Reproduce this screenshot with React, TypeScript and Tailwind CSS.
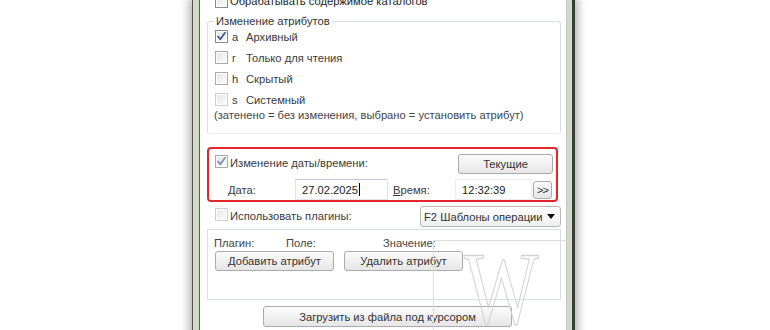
import React from 'react';

type BoxTone = 'normal' | 'light' | 'faint';

const CheckBox: React.FC<{ checked?: boolean; tone?: BoxTone; className?: string }> = ({
  checked,
  tone = 'normal',
  className = ''
}) => {
  const border =
    tone === 'normal' ? 'border-[#8a8a8a]' : tone === 'light' ? 'border-[#a9a9a9]' : 'border-[#cfcfcf]';
  return (
    <span
      className={`relative inline-flex w-[13px] h-[13px] shrink-0 border ${border} bg-gradient-to-br from-[#e4e4e4] to-[#fdfdfd] shadow-[inset_0_0_0_1px_#fff] ${className}`}
    >
      {checked && (
        <svg viewBox="0 0 13 13" className="absolute -left-px -top-px w-[13px] h-[13px]">
          <path
            d="M3 6.5 L5.3 9.3 L10 2.8"
            fill="none"
            stroke={tone === 'normal' ? '#3c5a9a' : '#7d8fb5'}
            strokeWidth="1.8"
            strokeLinecap="round"
            strokeLinejoin="round"
          />
        </svg>
      )}
    </span>
  );
};

const Button: React.FC<{ children: React.ReactNode; className?: string }> = ({ children, className = '' }) => (
  <div
    className={`flex items-center justify-center whitespace-nowrap border border-[#ababab] rounded-[3px] bg-gradient-to-b from-[#fbfbfb] to-[#e6e6e6] text-[#333] ${className}`}
  >
    {children}
  </div>
);

const AttrRow: React.FC<{ letter: string; label: string; checked?: boolean; tone?: BoxTone }> = ({
  letter,
  label,
  checked,
  tone
}) => (
  <div className="h-[21px] flex items-center">
    <CheckBox checked={checked} tone={tone} />
    <span className="ml-[4px] w-[14px]">{letter}</span>
    <span>{label}</span>
  </div>
);

export default function App() {
  return (
    <div className="relative w-[770px] h-[330px] overflow-hidden bg-white font-['Liberation_Sans',Arial,sans-serif] text-[11.2px] leading-[14px] text-[#3a3a3a] whitespace-nowrap">
      {/* window frame */}
      <div className="ml-[192px] w-[383px] h-[340px] flex bg-[#cfdbc2] border-l border-l-[#505050] border-r-[3px] border-r-[#3a3a3a] pl-[6px] pr-[5px] shadow-[0_0_9px_3px_rgba(0,0,0,0.3)]">
        <div className="flex-1 bg-white border-l border-l-[#5c5c5c] border-r border-r-[#c4c4c4] pl-[7px] pr-[5px] flex flex-col">
          {/* cut-off top row */}
          <div className="-mt-[7px] h-[16px] flex items-center pl-[8px] text-[#1c1c1c]">
            <CheckBox />
            <span className="ml-[2px]">Обрабатывать содержимое каталогов</span>
          </div>

          {/* attributes group */}
          <fieldset className="mt-[5px] border border-[#d9dfe3] border-b-[#eef1f3] rounded-[3px] pl-[6px] pr-0 pb-[11px] h-[120px]">
            <legend className="px-[2px] leading-[14px] text-[#333]">Изменение атрибутов</legend>
            <div className="mt-[-2px] ml-[1px]">
              <AttrRow letter="a" label="Архивный" checked />
              <AttrRow letter="r" label="Только для чтения" tone="light" />
              <AttrRow letter="h" label="Скрытый" tone="light" />
              <AttrRow letter="s" label="Системный" tone="faint" />
            </div>
            <div className="-mt-[2px] text-[#444]">(затенено = без изменения, выбрано = установить атрибут)</div>
          </fieldset>

          {/* date/time block */}
          <div className="mt-[13px] w-[351px] border-2 border-[#e3262e] rounded-[4px] pl-[6px] pr-[3px] pt-[5px]">
            <div className="h-[20px] flex items-start">
              <CheckBox checked tone="light" className="mt-[1px]" />
              <span className="ml-[2px] mt-[2px]">Изменение даты/времени:</span>
              <Button className="ml-auto w-[95px] h-[20px]">Текущие</Button>
            </div>
            <div className="mt-[5px] h-[21px] flex items-center">
              <span className="ml-[13px] w-[67px]">
                <span className="underline">Д</span>ата:
              </span>
              <div className="w-[93px] h-[21px] border border-[#e2e3ea] border-t-[#c6c8d0] flex items-center pl-[6px] text-[#222]">
                27.02.2025
                <span className="inline-block w-px h-[13px] bg-black ml-[1px]" />
              </div>
              <span className="ml-[5px] w-[62px]">
                <span className="underline">В</span>ремя:
              </span>
              <div className="w-[77px] h-[21px] border border-[#eeeef2] flex items-center pl-[6px] text-[#222]">
                12:32:39
              </div>
              <Button className="ml-[1px] w-[19px] h-[18px] text-[11px] tracking-[-1px]">&gt;&gt;</Button>
            </div>
          </div>

          {/* plugins */}
          <div className="mt-[4px] h-[21px] flex items-center pl-[8px]">
            <CheckBox tone="faint" className="-mt-[4px]" />
            <span className="ml-[2px] -mt-[2px]">Использовать плагины:</span>
            <div className="ml-auto w-[141px] h-[21px] border border-[#b9b9b9] rounded-[3px] bg-gradient-to-b from-white to-[#efefef] flex items-center pl-[3px] pr-[5px] text-[#333]">
              <span>F2 Шаблоны операции</span>
              <span className="ml-auto w-0 h-0 border-l-[4px] border-r-[4px] border-t-[5px] border-l-transparent border-r-transparent border-t-[#111]" />
            </div>
          </div>

          <div className="mt-[2px] w-[354px] h-[71px] border border-[#dadfe2] pt-[6px] pl-[6px]">
            <div className="flex h-[14px] text-[#444]">
              <span className="w-[72px]">Плагин:</span>
              <span className="w-[97px]">Поле:</span>
              <span>Значение:</span>
            </div>
            <div className="mt-[1px] ml-[1px] flex gap-[10px]">
              <Button className="w-[119px] h-[20px]">Добавить атрибут</Button>
              <Button className="w-[119px] h-[20px]">Удалить атрибут</Button>
            </div>
          </div>

          <Button className="mt-[6px] ml-[56px] w-[249px] h-[21px]">Загрузить из файла под курсором</Button>
        </div>
      </div>

      {/* watermark overlay */}
      <div className="absolute left-[433px] top-[240px] w-[134px] h-[100px] border-l border-t border-[#dcdcdc] pointer-events-none" />
      <div className="absolute left-[464px] top-[248px] font-['Liberation_Serif',serif] text-[104px] leading-[80px] text-transparent [-webkit-text-stroke:1.3px_#d4d4d4] scale-x-[0.76] origin-left pointer-events-none">
        W
      </div>
    </div>
  );
}
